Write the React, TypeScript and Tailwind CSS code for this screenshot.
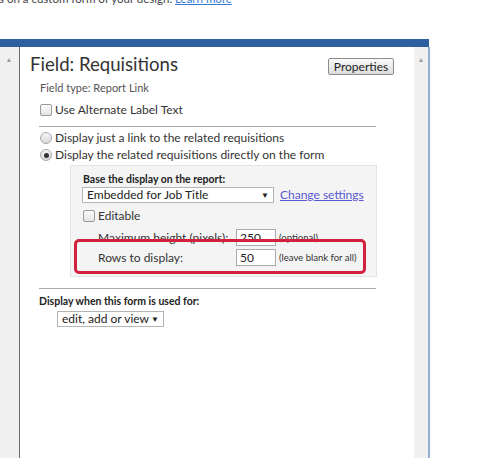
import React from "react";

function Checkbox() {
  return <span className="inline-block shrink-0 w-[12px] h-[12px] rounded-[2px] border border-[#9a9a9a] bg-gradient-to-b from-[#fbfbfb] to-[#e4e4e4]" />;
}

function Radio({ checked }: { checked?: boolean }) {
  return (
    <span className="inline-flex shrink-0 items-center justify-center w-[12px] h-[12px] rounded-full border border-[#a8a8a8] bg-gradient-to-b from-[#f4f4f4] to-[#d8d8d8]">
      {checked && <span className="w-[5px] h-[5px] rounded-full bg-[#333]" />}
    </span>
  );
}

function Select({ label, width }: { label: string; width: string }) {
  return (
    <div className={`flex shrink-0 items-center justify-between h-[16px] border border-[#b5b5b5] bg-white pl-[4px] pr-[4px] text-[12px] leading-[14px] text-[#222] whitespace-nowrap ${width}`}>
      <span>{label}</span>
      <span className="text-[8px] text-[#222]">▼</span>
    </div>
  );
}

function Input({ value }: { value: string }) {
  return (
    <div className="shrink-0 w-[40px] h-[17px] border border-[#aaa] bg-white pl-[3px] text-[12px] leading-[15px] text-[#222]">
      {value}
    </div>
  );
}

export default function App() {
  return (
    <div className="w-[490px] h-[458px] overflow-hidden bg-white text-[#333]" style={{ fontFamily: "Lato, 'Liberation Sans', sans-serif" }}>
      {/* intro line, cut off at top */}
      <div className="h-[39px] overflow-hidden">
        <p className="-mt-[8px] -ml-[1px] text-[11.5px] leading-[14px] text-[#444] whitespace-nowrap">
          s on a custom form of your design. <span className="text-[#3a7bd5] underline">Learn more</span>
        </p>
      </div>

      {/* dialog window */}
      <div className="w-[430px] h-[419px] flex flex-col">
        <div className="h-[8px] bg-[#2e5f9e] w-[429px]" />
        <div className="flex flex-1">
          {/* left scrollbar */}
          <div className="w-[20px] bg-[#f0f0f0] border-r border-[#6a6a6a] flex justify-center pt-[8px] pr-[1px]">
            <span className="text-[7px] leading-[8px] text-[#a0a0a0]">▲</span>
          </div>

          {/* content */}
          <div className="flex-1 pl-[10px] pt-[5px] pr-[20px]">
            <div className="flex justify-between items-start">
              <h1 className="text-[18.6px] leading-[24px] text-[#333]">Field: Requisitions</h1>
              <button className="mt-[6px] w-[66px] h-[17px] rounded-[2px] border border-[#8c8c8c] bg-gradient-to-b from-[#fafafa] to-[#dcdcdc] text-[12px] leading-[14px] text-[#222]">
                Properties
              </button>
            </div>

            <div className="ml-[10px] mt-[4px] text-[11px] leading-[16px] text-[#555]">Field type: Report Link</div>
            <div className="ml-[10px] mt-[6px] h-[16px] flex items-center gap-[3px] text-[12px] whitespace-nowrap">
              <Checkbox />
              <span>Use Alternate Label Text</span>
            </div>

            <div className="ml-[9px] mt-[8px] w-[337px] h-px bg-[#ababab]" />

            <div className="ml-[10px] mt-[3px] h-[16px] flex items-center gap-[3px] text-[12px] whitespace-nowrap">
              <Radio />
              <span>Display just a link to the related requisitions</span>
            </div>
            <div className="ml-[10px] mt-px h-[16px] flex items-center gap-[3px] text-[12px] whitespace-nowrap">
              <Radio checked />
              <span>Display the related requisitions directly on the form</span>
            </div>

            {/* report settings box */}
            <div className="relative ml-[40px] mt-[2px] w-[307px] h-[112px] bg-[#f4f4f4] border border-[#e3e3e3] pl-[12px] pt-[6px] whitespace-nowrap">
              <div className="text-[10.5px] leading-[14px] font-bold text-[#222]">Base the display on the report:</div>
              <div className="mt-[1px] flex items-center gap-[6px]">
                <Select label="Embedded for Job Title" width="w-[192px] -ml-px" />
                <span className="text-[12px] leading-[16px] text-[#5a58d0] underline">Change settings</span>
              </div>
              <div className="mt-[6px] h-[14px] flex items-center gap-[3px] text-[12px]">
                <Checkbox />
                <span>Editable</span>
              </div>
              <div className="mt-[6px] flex items-center">
                <span className="ml-[15px] w-[138px] shrink-0 text-[12px] leading-[16px]">Maximum height (pixels):</span>
                <Input value="250" />
                <span className="ml-[3px] text-[9.5px] leading-[12px]">(optional)</span>
              </div>
              <div className="mt-[3px] flex items-center">
                <span className="ml-[15px] w-[138px] shrink-0 text-[12px] leading-[16px]">Rows to display:</span>
                <Input value="50" />
                <span className="ml-[3px] text-[9.5px] leading-[12px]">(leave blank for all)</span>
              </div>
              {/* highlight annotation */}
              <div className="absolute left-[3px] top-[73px] w-[292px] h-[35px] rounded-[5px] border-[3px] border-[#d2213f]" />
            </div>

            <div className="ml-[9px] mt-[11px] w-[337px] h-px bg-[#ababab]" />

            <div className="ml-[9px] mt-[5px] text-[10.5px] leading-[14px] font-bold text-[#222] whitespace-nowrap">Display when this form is used for:</div>
            <div className="ml-[27px] mt-[3px]">
              <Select label="edit, add or view" width="w-[107px]" />
            </div>
          </div>

          {/* right scrollbar */}
          <div className="w-[14px] bg-[#f0f0f0] flex justify-center pt-[8px]">
            <span className="text-[7px] leading-[8px] text-[#a0a0a0]">▲</span>
          </div>
          <div className="w-[2px] bg-[#93aed6]" />
        </div>
      </div>
    </div>
  );
}
